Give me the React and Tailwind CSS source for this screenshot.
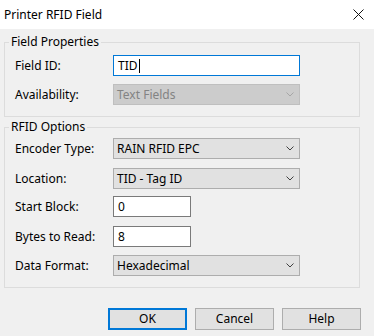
import React from "react";

const font = { fontFamily: '"Noto Sans", "Liberation Sans", sans-serif' };

const Chevron = ({ disabled }) => (
  <svg width="8" height="5" viewBox="0 0 8 5" className="shrink-0">
    <path
      d="M0.5 0.5 L4 4 L7.5 0.5"
      fill="none"
      stroke={disabled ? "#a6a6a6" : "#404040"}
      strokeWidth="1"
    />
  </svg>
);

const Select = ({ value, disabled }) => (
  <div
    className={
      "w-[187px] h-[21px] flex items-center justify-between pl-[3px] pr-[5px] border " +
      (disabled
        ? "bg-[#cccccc] border-[#bfbfbf] text-[#838383]"
        : "bg-[#e1e1e1] border-[#adadad] text-black")
    }
  >
    <span>{value}</span>
    <Chevron disabled={disabled} />
  </div>
);

const TextBox = ({ value, wide, focused }) => (
  <div
    className={
      "h-[21px] flex items-center px-[4px] bg-white border " +
      (wide ? "w-[187px] " : "w-[78px] ") +
      (focused ? "border-[#0078d7]" : "border-[#7a7a7a]")
    }
  >
    <span>{value}</span>
    {focused && <span className="w-px h-[14px] bg-black ml-px" />}
  </div>
);

const Row = ({ label, children, className = "" }) => (
  <div className={"flex items-center " + className}>
    <span className="w-[98px] shrink-0">{label}</span>
    {children}
  </div>
);

const Group = ({ title, children, className = "" }) => (
  <fieldset className={"w-[356px] border border-[#dcdcdc] " + className}>
    <legend className="ml-[4px] px-[2px] leading-[16px]">{title}</legend>
    <div className="pl-[10px] pb-[11px]">{children}</div>
  </fieldset>
);

const Button = ({ children, primary }) => (
  <button
    className={
      "w-[79px] h-[22px] bg-[#e1e1e1] flex items-center justify-center " +
      (primary ? "border-2 border-[#0078d7]" : "border border-[#adadad]")
    }
  >
    {children}
  </button>
);

export default function App() {
  return (
    <div className="w-[374px] h-[336px] bg-[#f0f0f0] text-[12px] text-black flex flex-col" style={font}>
      {/* title bar */}
      <div className="h-[29px] bg-white flex items-center justify-between pl-[4px] pr-[10px] shrink-0">
        <span className="text-[12px]">Printer RFID Field</span>
        <svg width="11" height="11" viewBox="0 0 11 11">
          <path d="M0.5 0.5 L10.5 10.5 M10.5 0.5 L0.5 10.5" stroke="#111" strokeWidth="1" />
        </svg>
      </div>

      <div className="pl-[4px] pt-[5px] flex flex-col">
        <Group title="Field Properties">
          <Row label="Field ID:" className="mt-[5px]">
            <TextBox value="TID" wide focused />
          </Row>
          <Row label="Availability:" className="mt-[8px]">
            <Select value="Text Fields" disabled />
          </Row>
        </Group>

        <Group title="RFID Options" className="mt-[2px]">
          <Row label="Encoder Type:" className="mt-[3px]">
            <Select value="RAIN RFID EPC" />
          </Row>
          <Row label="Location:" className="mt-[9px]">
            <Select value="TID - Tag ID" />
          </Row>
          <Row label="Start Block:" className="mt-[7px]">
            <TextBox value="0" />
          </Row>
          <Row label="Bytes to Read:" className="mt-[9px]">
            <TextBox value="8" />
          </Row>
          <Row label="Data Format:" className="mt-[8px]">
            <Select value="Hexadecimal" />
          </Row>
        </Group>
      </div>

      <div className="flex justify-end gap-[8px] pr-[13px] mt-[20px]">
        <Button primary>OK</Button>
        <Button>Cancel</Button>
        <Button>Help</Button>
      </div>
    </div>
  );
}
